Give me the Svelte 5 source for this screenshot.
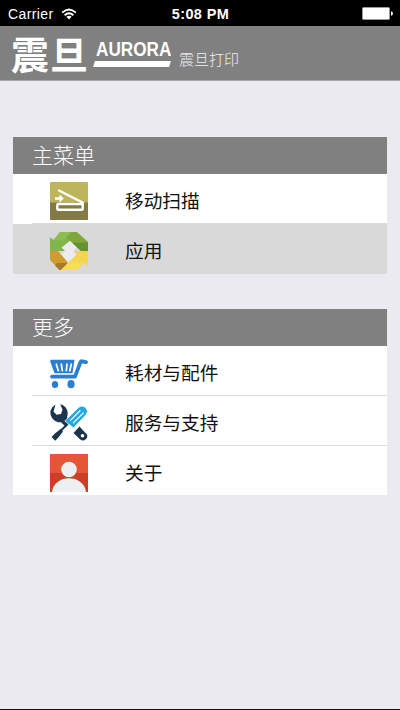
<script>
  const sections = [
    {
      title: '主菜单',
      items: [
        { icon: 'scan', label: '移动扫描' },
        { icon: 'apps', label: '应用', active: true },
      ],
    },
    {
      title: '更多',
      items: [
        { icon: 'cart', label: '耗材与配件' },
        { icon: 'tools', label: '服务与支持' },
        { icon: 'about', label: '关于' },
      ],
    },
  ];
</script>

<div class="screen">
  <div class="status-bar">
    <div class="carrier">
      <span>Carrier</span>
      <svg width="16" height="12" viewBox="0 0 16 12">
        <path d="M1.2 4.6Q8-1.8 14.8 4.6" fill="none" stroke="#fff" stroke-width="1.9" />
        <path d="M3.6 7.2Q8 3.2 12.4 7.2" fill="none" stroke="#fff" stroke-width="1.9" />
        <path d="M5.4 8.7Q8 6.6 10.6 8.7L8 11.4Z" fill="#fff" />
      </svg>
    </div>
    <span class="time">5:08 PM</span>
    <div class="battery">
      <svg width="31" height="13" viewBox="0 0 31 13">
        <rect x="0.5" y="0.5" width="27" height="12" rx="1" fill="#fff" stroke="#999" />
        <path d="M29 4.5h1l.8 1v2l-.8 1h-1z" fill="#fff" />
      </svg>
    </div>
  </div>

  <header>
    <svg class="logo" width="161" height="54" viewBox="0 0 161 54">
      <text class="logo-cn" x="-1" y="43">震</text>
      <text class="logo-cn" x="38" y="43">旦</text>
      <text class="logo-en" transform="translate(84 30) scale(0.86 1)">AURORA</text>
      <path d="M83 35H159L157 41H81Z" fill="#fff" />
    </svg>
    <span class="app-name">震旦打印</span>
  </header>

  <main>
    {#each sections as section}
      <section>
        <h2>{section.title}</h2>
        <ul>
          {#each section.items as item}
            <li class:active={item.active}>
              <svg class="icon" width="38" height="38" viewBox="0 0 38 38">
                {#if item.icon === 'scan'}
                  <rect width="38" height="38" rx="1" fill="#bdb45b" />
                  <path d="M0 20.5H38V37a1 1 0 0 1-1 1H1a1 1 0 0 1-1-1Z" fill="#837a45" />
                  <path d="M9 8.5L32.5 20.5" stroke="#fff" stroke-width="2.4" stroke-linecap="round" />
                  <rect x="7.3" y="22" width="25.4" height="5.8" rx="1" fill="#837a45" stroke="#fff" stroke-width="2.4" />
                  <path d="M31 20h2.9v3H31zM5 15.2h4.5v-2.8l4.3 4.1-4.3 4.1v-2.8H5z" fill="#fff" />
                {:else if item.icon === 'apps'}
                  <path d="M20 8L27 15L23.5 19L26.5 23L17 31L10 23L15 19L11.5 15.5Z" fill="#ececee" />
                  <path d="M10 0H21.5L21 8L11.5 15.5L15 19H0V5L3.5 8Z" fill="#82b648" />
                  <path d="M10 0H21.5L13 8.5H3.5Z" fill="#8cbd50" />
                  <path d="M21.5 0H27L38 10V19H31L16.5 5.5Z" fill="#7fa63b" />
                  <path d="M22.5 11L31 19H38V10.5Z" fill="#64922e" />
                  <path d="M0 19H8L18 30.5L12 38H9.5L0 28Z" fill="#cf9d2c" />
                  <path d="M7 31H18L12 38H9.5L5 33.5Z" fill="#a87828" />
                  <path d="M23.5 19H38V34L34 30.5L27 38H11L26.5 23Z" fill="#f3d54f" />
                  <path d="M34 30.5L27 38H11L18.5 30.5Z" fill="#f7db5d" />
                {:else if item.icon === 'cart'}
                  <path d="M1 5.8H24.5L22.5 19.2H4.5L.3 7.8Q0 5.8 1 5.8Z" fill="#2b7fd3" />
                  <path d="M6.3 10.2L8.3 16.7M11.3 10.2L12.3 16.7M17 10.2L16.3 16.7M21.3 10.2L19.8 16.7" stroke="#fff" stroke-width="1.7" stroke-linecap="round" />
                  <path d="M2 22.7H25L30.5 8.1Q31 7.1 32 7.3L36 8.1" fill="none" stroke="#2b7fd3" stroke-width="3.8" stroke-linecap="round" stroke-linejoin="round" />
                  <ellipse cx="5" cy="30.5" rx="3.2" ry="3.5" fill="#2b7fd3" />
                  <ellipse cx="21" cy="30.2" rx="3.6" ry="4.1" fill="#2b7fd3" />
                {:else if item.icon === 'tools'}
                  <path d="M5.5 .8Q2 2.4.6 6.4C-.7 12.8 4.5 18.6 11 18.2L16 23L21 17.8L17 13.2C19.2 7.8 16.2 1.5 10.2.3L12.5 5.5L11 10L6.5 10.8L3.5 7.5Z" fill="#1c344e" />
                  <path d="M29.5 22.5L36 29.5Q38.6 32.2 36 35Q33 38 30 35.2L23.5 29Z" fill="#1c344e" />
                  <circle cx="32.5" cy="31.8" r="1.8" fill="#fff" />
                  <path d="M17 20.5L10 27.5" stroke="#1c344e" stroke-width="2" />
                  <path d="M10.6 25L13 27.5L8.8 33L5.2 36.8L1.5 33L5.2 29.2Z" fill="#1c344e" />
                  <path d="M28.5 3.5Q32.5 .5 36 4Q39 7.2 36.2 10.5L23.5 24L14.8 17Z" fill="#24a8df" stroke="#fff" stroke-width="0.8" />
                  <path d="M20.5 16.4L30 6.8M23.5 18.8L33.3 9" stroke="#e9f8fd" stroke-width="1.3" stroke-linecap="round" />
                {:else}
                  <path d="M0 0H38V19H0Z" fill="#e45638" />
                  <path d="M0 19H38V38H0Z" fill="#cb3e28" />
                  <circle cx="19" cy="15.5" r="7.8" fill="#ecf0f0" />
                  <path d="M2 38C4 19.5 34 19.5 36 38Z" fill="#ecf0f0" />
                {/if}
              </svg>
              <span class="label">{item.label}</span>
            </li>
          {/each}
        </ul>
      </section>
    {/each}
  </main>
</div>

<style>
  :global(body) {
    margin: 0;
  }

  .screen {
    display: flex;
    flex-direction: column;
    box-sizing: border-box;
    height: 710px;
    background: #ebeaf0;
    border-bottom: 1px solid #111;
    font-family: "Liberation Sans", "Noto Sans CJK SC", sans-serif;
  }

  .status-bar {
    display: grid;
    grid-template-columns: 1fr auto 1fr;
    align-items: center;
    box-sizing: border-box;
    height: 26px;
    padding: 2px 7px 0 8px;
    background: #000;
    color: #fff;
    font-size: 14px;
    line-height: 24px;
  }

  .carrier {
    display: flex;
    align-items: center;
    gap: 7px;
    letter-spacing: 0.4px;
  }

  .carrier svg {
    margin-bottom: 1px;
  }

  .time {
    font-size: 14.5px;
    font-weight: bold;
    letter-spacing: 0.4px;
  }

  .battery {
    display: flex;
    justify-content: flex-end;
    padding-bottom: 1px;
  }

  header {
    display: flex;
    box-sizing: border-box;
    height: 55px;
    padding-left: 12px;
    background: #808080;
    border-bottom: 1px solid #a8a8aa;
    color: #fff;
  }

  .logo {
    flex: none;
    overflow: visible;
  }

  .logo-cn {
    font-family: "Noto Sans CJK SC", sans-serif;
    font-size: 38px;
    font-weight: 700;
    fill: #fff;
  }

  .logo-en {
    font-family: "Liberation Sans", sans-serif;
    font-size: 20px;
    font-weight: bold;
    fill: #fff;
  }

  .app-name {
    margin: 23px 0 0 6px;
    font-size: 15px;
    font-weight: 300;
    line-height: 22px;
    color: #f0f0f0;
  }

  main {
    display: flex;
    flex-direction: column;
    gap: 35px;
    padding: 56px 13px 0;
  }

  h2 {
    margin: 0;
    padding-left: 19px;
    height: 37px;
    background: #808080;
    color: #fff;
    font-size: 21px;
    font-weight: 300;
    line-height: 38px;
  }

  ul {
    margin: 0;
    padding: 0;
    list-style: none;
    background: #fff;
  }

  li {
    display: flex;
    align-items: center;
    box-sizing: border-box;
    height: 50px;
    padding: 3px 0 0 37px;
    background: linear-gradient(#dcdcde, #dcdcde) 19px 100% / 100% 1px no-repeat;
  }

  li.active {
    background: #d9d9d9;
  }

  li:last-child:not(.active) {
    height: 49px;
    padding-top: 4px;
    background: none;
  }

  .icon {
    flex: none;
  }

  .label {
    margin: 3px 0 0 37px;
    color: #111;
    font-size: 18.7px;
    line-height: 28px;
  }
</style>
